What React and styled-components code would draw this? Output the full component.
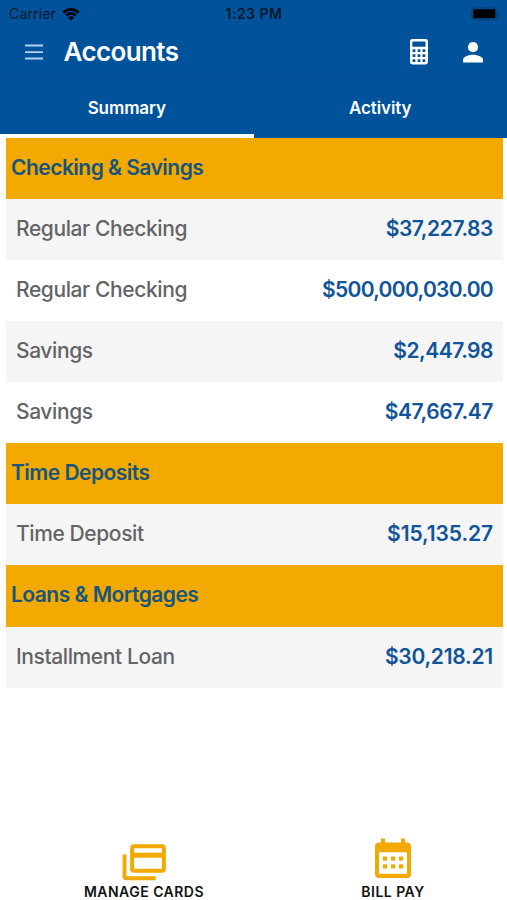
import React from 'react'
import styled, { createGlobalStyle } from 'styled-components'

const colors = {
  blue: '#00539b',
  headingBlue: '#17557f',
  amber: '#f2a900',
  stripe: '#f5f5f5',
  label: '#636466',
  amount: '#10549a',
}

const sections = [
  {
    title: 'Checking & Savings',
    accounts: [
      { name: 'Regular Checking', balance: '$37,227.83', tracking: -0.45 },
      { name: 'Regular Checking', balance: '$500,000,030.00', tracking: -0.7 },
      { name: 'Savings', balance: '$2,447.98', tracking: -0.5 },
      { name: 'Savings', balance: '$47,667.47', tracking: -0.4 },
    ],
  },
  {
    title: 'Time Deposits',
    accounts: [{ name: 'Time Deposit', balance: '$15,135.27', tracking: -0.1 }],
  },
  {
    title: 'Loans & Mortgages',
    accounts: [{ name: 'Installment Loan', balance: '$30,218.21', tracking: -0.25 }],
  },
]

const WifiIcon = () => (
  <svg width="18" height="14" viewBox="0 0 18 14">
    <path d="M.4 4.6a12.2 12.2 0 0 1 17.2 0l-1.8 1.9a9.6 9.6 0 0 0-13.6 0z" />
    <path d="M3.2 7.5a8.2 8.2 0 0 1 11.6 0l-1.8 1.9a5.6 5.6 0 0 0-8 0z" />
    <path d="M6 10.4a4.2 4.2 0 0 1 6 0l-3 3.1z" />
  </svg>
)

const BatteryIcon = () => (
  <svg width="30" height="14" viewBox="0 0 30 14">
    <rect x=".5" y=".8" width="25.4" height="12" rx="3.4" fill="none" stroke="#000" strokeOpacity=".25" />
    <rect x="2" y="2.3" width="22.4" height="9" rx="1.2" />
    <path d="M27.3 4.7c1.6.7 1.6 3.5 0 4.2z" fillOpacity=".25" />
  </svg>
)

const MenuIcon = () => (
  <svg width="18" height="16" viewBox="0 0 18 16" fill="none" stroke="#b4d3f2" strokeWidth="1.8">
    <path d="M0 1.5h18M0 8.1h18M0 14.5h18" />
  </svg>
)

const CalculatorIcon = () => (
  <svg width="18" height="26" viewBox="0 0 18 26">
    <rect x="0" y="0" width="18" height="25.5" rx="2.4" fill="#fff" />
    <g fill={colors.blue}>
      <rect x="2.3" y="2.6" width="13.2" height="5.2" rx=".4" />
      {[10.2, 15.2, 20.2].map(y =>
        [2.6, 7.6, 12.5].map(x => (
          <rect key={`${x}-${y}`} x={x} y={y} width="2.8" height="2.8" rx=".5" />
        ))
      )}
    </g>
  </svg>
)

const PersonIcon = () => (
  <svg width="20" height="21" viewBox="0 0 20 21" fill="#fff">
    <circle cx="10" cy="5.2" r="5.1" />
    <path d="M0 20.4v-2.6c0-3.3 6.6-5 10-5s10 1.7 10 5v2.6z" />
  </svg>
)

const CardsIcon = () => (
  <svg width="44" height="37" viewBox="0 0 44 37" fill="none" stroke={colors.amber} strokeWidth="3.9">
    <rect x="10.1" y="2.3" width="31.8" height="24.4" rx="2" />
    <path d="M10.1 11.2h31.8" strokeWidth="5" />
    <path d="M2.5 10.5v21.7a2 2 0 0 0 2 2h29.2" />
  </svg>
)

const CalendarIcon = () => (
  <svg width="36" height="43" viewBox="0 0 36 43" fill={colors.amber}>
    <path
      fillRule="evenodd"
      d="M6 .5h4v4h16v-4h4v4h2a4 4 0 0 1 4 4v27.5a4 4 0 0 1-4 4H4a4 4 0 0 1-4-4V8.500a4 4 0 0 1 4-4h2zM4 14.3v21.400h28V14.3z"
    />
    {[18.5, 26.3].map(y =>
      [7.9, 16, 24].map(x => <rect key={`${x}-${y}`} x={x} y={y} width="4.200" height="4.200" />)
    )}
  </svg>
)

const App = () => (
  <Screen>
    <GlobalStyle />
    <StatusBar>
      <Carrier>
        Carrier
        <WifiIcon />
      </Carrier>
      <Clock>1:23 PM</Clock>
      <Battery>
        <BatteryIcon />
      </Battery>
    </StatusBar>
    <NavBar>
      <MenuIcon />
      <Title>Accounts</Title>
      <Actions>
        <CalculatorIcon />
        <PersonIcon />
      </Actions>
    </NavBar>
    <Tabs>
      <Tab $active>Summary</Tab>
      <Tab>Activity</Tab>
    </Tabs>
    <AccountList>
      {sections.map(section => (
        <section key={section.title}>
          <SectionTitle>{section.title}</SectionTitle>
          {section.accounts.map((account, i) => (
            <AccountRow key={account.balance} $striped={i % 2 === 0}>
              <AccountName>{account.name}</AccountName>
              <Balance $tracking={account.tracking}>{account.balance}</Balance>
            </AccountRow>
          ))}
        </section>
      ))}
    </AccountList>
    <BottomBar>
      <BottomAction $width={288}>
        <CardsIcon />
        <ActionLabel>MANAGE CARDS</ActionLabel>
      </BottomAction>
      <BottomAction $width={210}>
        <CalendarIcon />
        <ActionLabel>BILL PAY</ActionLabel>
      </BottomAction>
    </BottomBar>
  </Screen>
)

export default App

const GlobalStyle = createGlobalStyle`
  body {
    margin: 0;
    background: #fff;
    font-family: Inter, 'Liberation Sans', sans-serif;
  }

  svg {
    display: block;
    flex-shrink: 0;
  }
`

const Screen = styled.div`
  display: flex;
  flex-direction: column;
  width: 507px;
  height: 900px;
  overflow: hidden;
  background: #fff;
`

const StatusBar = styled.div`
  display: grid;
  grid-template-columns: 1fr auto 1fr;
  align-items: center;
  height: 27px;
  padding: 0 6px 0 9px;
  background: ${colors.blue};
  color: #06182b;
  font-size: 14px;
  line-height: 27px;
`

const Carrier = styled.div`
  display: flex;
  align-items: center;
  gap: 6px;
  letter-spacing: 0.15px;
`

const Clock = styled.div`
  margin-right: 2px;
  font-weight: 600;
  letter-spacing: 0.5px;
`

const Battery = styled.div`
  display: flex;
  justify-content: flex-end;
`

const NavBar = styled.header`
  display: flex;
  align-items: center;
  box-sizing: border-box;
  height: 52px;
  padding: 0 24px 1px 25px;
  background: ${colors.blue};
  border-bottom: 1px solid #004f94;
`

const Title = styled.h1`
  margin: 0 0 0 20.5px;
  color: #fff;
  font-size: 26px;
  font-weight: 600;
  line-height: 40px;
  letter-spacing: -0.6px;
`

const Actions = styled.div`
  display: flex;
  align-items: center;
  gap: 35px;
  margin-left: auto;
`

const Tabs = styled.nav`
  display: flex;
  height: 58.5px;
  background: ${colors.blue};
`

const Tab = styled.div`
  flex: 1;
  box-sizing: border-box;
  border-bottom: 4px solid ${props => (props.$active ? '#fff' : colors.blue)};
  color: #fff;
  font-size: 17px;
  font-weight: 600;
  line-height: 59px;
  letter-spacing: -0.1px;
  text-align: center;
`

const AccountList = styled.main`
  flex: 1;
  padding: 0.3px 4px 0 6px;
`

const SectionTitle = styled.h2`
  box-sizing: border-box;
  height: 61.1px;
  margin: 0;
  padding-left: 5px;
  background: ${colors.amber};
  color: ${colors.headingBlue};
  font-size: 21px;
  font-weight: 600;
  line-height: 60px;
  letter-spacing: -0.52px;
`

const AccountRow = styled.div`
  display: flex;
  justify-content: space-between;
  height: 61.1px;
  padding: 0 10px;
  background: ${props => (props.$striped ? colors.stripe : '#fff')};
  font-size: 21px;
  line-height: 60px;
`

const AccountName = styled.span`
  color: ${colors.label};
  font-weight: 500;
  letter-spacing: -0.4px;
`

const Balance = styled.span`
  color: ${colors.amount};
  font-weight: 600;
  letter-spacing: ${props => props.$tracking}px;
`

const BottomBar = styled.footer`
  display: flex;
  height: 63px;
`

const BottomAction = styled.div`
  display: flex;
  flex-direction: column;
  align-items: center;
  justify-content: flex-end;
  gap: 3px;
  width: ${props => props.$width}px;
`

const ActionLabel = styled.span`
  color: #111;
  font-size: 14px;
  font-weight: 600;
  line-height: 16px;
  letter-spacing: 0.48px;
`
